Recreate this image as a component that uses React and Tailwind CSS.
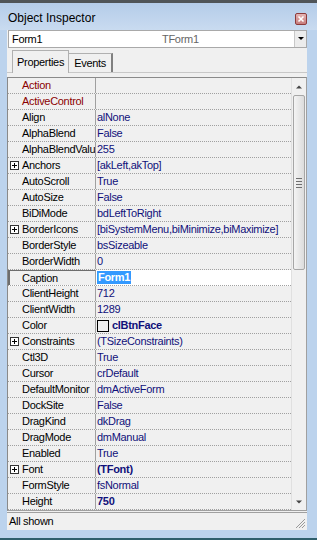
import React from "react";

const rows = [
  { n: "Action", v: "", red: true },
  { n: "ActiveControl", v: "", red: true },
  { n: "Align", v: "alNone" },
  { n: "AlphaBlend", v: "False" },
  { n: "AlphaBlendValue", v: "255" },
  { n: "Anchors", v: "[akLeft,akTop]", plus: true },
  { n: "AutoScroll", v: "True" },
  { n: "AutoSize", v: "False" },
  { n: "BiDiMode", v: "bdLeftToRight" },
  { n: "BorderIcons", v: "[biSystemMenu,biMinimize,biMaximize]", plus: true },
  { n: "BorderStyle", v: "bsSizeable" },
  { n: "BorderWidth", v: "0" },
  { n: "Caption", v: "Form1", sel: true },
  { n: "ClientHeight", v: "712" },
  { n: "ClientWidth", v: "1289" },
  { n: "Color", v: "clBtnFace", bold: true, swatch: true },
  { n: "Constraints", v: "(TSizeConstraints)", plus: true },
  { n: "Ctl3D", v: "True" },
  { n: "Cursor", v: "crDefault" },
  { n: "DefaultMonitor", v: "dmActiveForm" },
  { n: "DockSite", v: "False" },
  { n: "DragKind", v: "dkDrag" },
  { n: "DragMode", v: "dmManual" },
  { n: "Enabled", v: "True" },
  { n: "Font", v: "(TFont)", plus: true, bold: true },
  { n: "FormStyle", v: "fsNormal" },
  { n: "Height", v: "750", bold: true },
];

function PlusBox() {
  return (
    <span className="absolute left-[2px] top-[3px] w-[9px] h-[9px] border border-[#333] bg-white flex items-center justify-center">
      <svg width="7" height="7" viewBox="0 0 7 7">
        <path d="M1 3.5h5M3.5 1v5" stroke="#000" strokeWidth="1" />
      </svg>
    </span>
  );
}

function Row({ r }) {
  return (
    <div className={"flex h-[16px] border-b border-dotted border-[#a0a0a0] " + (r.sel ? "bg-white" : "")}>
      <div
        className={
          "relative w-[88px] shrink-0 border-r border-[#a0a0a0] overflow-hidden whitespace-nowrap leading-[15px] " +
          (r.sel ? "pl-[12px] bg-[#f0f0f0] border-l-2 border-l-[#6d6d6d] border-t border-t-[#6d6d6d] " : "pl-[14px] ") +
          (r.red ? "text-[#8b0000]" : "text-black")
        }
      >
        {r.plus && <PlusBox />}
        {r.n}
      </div>
      <div className="flex-1 pl-[1px] overflow-hidden whitespace-nowrap leading-[15px] text-[#10107a] flex items-center">
        {r.swatch && <span className="inline-block w-[12px] h-[12px] border border-black bg-[#f0f0f0] mr-[3px]" />}
        {r.sel ? (
          <span className="bg-[#3399ff] text-white font-bold px-[1px] leading-[13px]">{r.v}</span>
        ) : (
          <span className={r.bold ? "font-bold" : ""}>{r.v}</span>
        )}
      </div>
    </div>
  );
}

export default function App() {
  return (
    <div
      className="w-[317px] h-[540px] flex flex-col bg-[#bcd3ed] overflow-hidden"
      style={{ fontFamily: '"Liberation Sans", Arial, sans-serif' }}
    >
      <div className="h-[3px] bg-[#4f5458] shrink-0" />
      {/* title bar */}
      <div className="h-[27px] shrink-0 flex items-center justify-between pl-[8px] pr-[10px] bg-gradient-to-b from-[#b4cce9] to-[#c9dbf0]">
        <span className="text-[12px] text-black pt-[2px]">Object Inspector</span>
        <span className="w-[12px] h-[12px] mt-[4px] rounded-[2px] border border-[#8d3b3b] bg-gradient-to-b from-[#e4b4b4] to-[#c77d7d] flex items-center justify-center">
          <svg width="8" height="8" viewBox="0 0 8 8">
            <path d="M1.5 1.5l5 5M6.5 1.5l-5 5" stroke="#fff" strokeWidth="1.6" />
          </svg>
        </span>
      </div>
      <div className="flex-1 ml-[7px] mr-[10px] bg-[#f0f0f0] flex flex-col text-[11px] tracking-[-0.3px] min-h-0">
        {/* combo */}
        <div className="h-[18px] ml-[1px] flex items-center bg-white border border-[#a9a9a9]">
          <span className="pl-[3px] w-[153px] text-black">Form1</span>
          <span className="flex-1 text-[#666]">TForm1</span>
          <span className="w-[12px] h-[16px] bg-[#ececec] border-l border-[#c8c8c8] flex items-center justify-center">
            <svg width="6" height="4" viewBox="0 0 6 4">
              <path d="M0 0h6L3 3z" fill="#000" />
            </svg>
          </span>
        </div>
        {/* tabs */}
        <div className="h-[25px] flex items-end pl-[5px] border-b border-[#c8c8c8]">
          <div className="h-[23px] px-[4px] border border-b-0 border-[#b0b0b0] bg-[#f0f0f0] text-black flex items-center relative top-[1px]">
            Properties
          </div>
          <div className="h-[19px] px-[5px] border border-b-0 border-l-0 border-[#b0b0b0] border-r-2 border-r-[#808080] bg-[#f0f0f0] text-black flex items-center">
            Events
          </div>
        </div>
        <div className="h-[4px]" />
        {/* grid */}
        <div className="flex h-[434px] border border-[#a0a0a0] border-l-[#8a8a8a] border-t-[#8a8a8a] bg-[#f0f0f0]">
          <div className="flex-1 overflow-hidden">
            {rows.map((r) => (
              <Row key={r.n} r={r} />
            ))}
          </div>
          {/* scrollbar */}
          <div className="w-[15px] shrink-0 flex flex-col bg-[#f0f0f0] border-l border-[#e0e0e0]">
            <div className="h-[17px] flex items-center justify-center">
              <svg width="6" height="4" viewBox="0 0 6 4">
                <path d="M0 3.5h6L3 0.5z" fill="#444" />
              </svg>
            </div>
            <div className="h-[175px] mx-[1px] rounded-[2px] border border-[#a6a6a6] bg-gradient-to-r from-[#f4f4f4] to-[#dcdcdc] flex items-center justify-center">
              <div className="flex flex-col gap-[2px]">
                <div className="w-[6px] h-[1px] bg-[#6f6f6f]" />
                <div className="w-[6px] h-[1px] bg-[#6f6f6f]" />
                <div className="w-[6px] h-[1px] bg-[#6f6f6f]" />
                <div className="w-[6px] h-[1px] bg-[#6f6f6f]" />
              </div>
            </div>
            <div className="flex-1" />
            <div className="h-[17px] flex items-center justify-center">
              <svg width="6" height="4" viewBox="0 0 6 4">
                <path d="M0 0.5h6L3 3.5z" fill="#444" />
              </svg>
            </div>
          </div>
        </div>
        {/* status bar */}
        <div className="flex-1 mt-[1px] border-t border-[#a0a0a0] flex items-center justify-between pl-[2px]">
          <span className="text-black">All shown</span>
          <svg width="11" height="11" viewBox="0 0 11 11" className="self-end mb-[1px] mr-[1px]">
            <path d="M10 1L1 10M10 4L4 10M10 7L7 10" stroke="#9a9a9a" strokeWidth="1" />
          </svg>
        </div>
      </div>
      <div className="h-[8px] shrink-0" />
      <div className="h-[2px] bg-[#2f5f6c] shrink-0" />
    </div>
  );
}
